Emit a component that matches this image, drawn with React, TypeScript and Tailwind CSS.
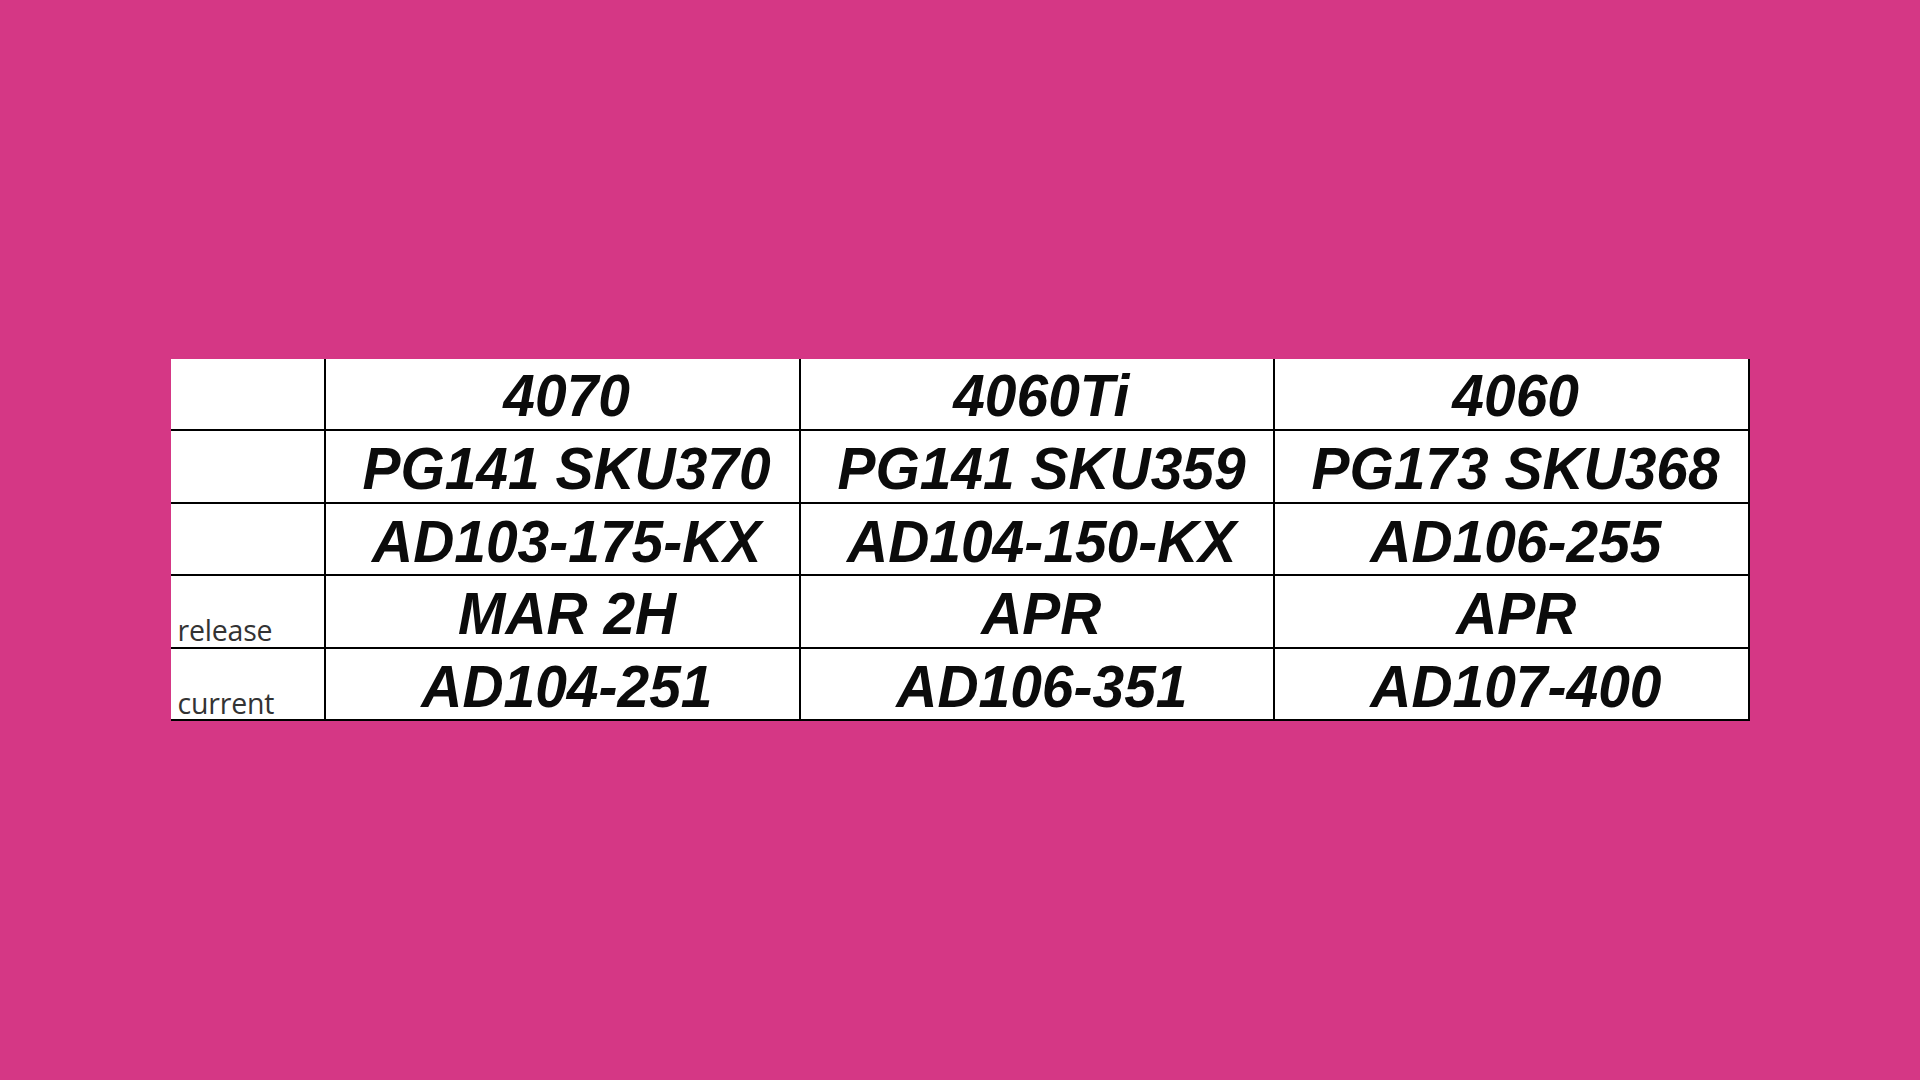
const rows = [
  { label: '', cells: ['4070', '4060Ti', '4060'] },
  { label: '', cells: ['PG141 SKU370', 'PG141 SKU359', 'PG173 SKU368'] },
  { label: '', cells: ['AD103-175-KX', 'AD104-150-KX', 'AD106-255'] },
  { label: 'release', cells: ['MAR 2H', 'APR', 'APR'] },
  { label: 'current', cells: ['AD104-251', 'AD106-351', 'AD107-400'] },
];

const App = () => {
  return (
    <div className="w-full h-screen bg-[#d53785] flex items-center justify-center">
      <div className="grid grid-cols-[155px_475px_474px_475px] bg-white">
        {rows.map((row, i) => (
          <div key={i} className="contents">
            <div className="h-[72.6px] border-r-2 border-b-2 border-black flex items-end pl-[7px] pb-[2px]">
              <span
                className="text-[28.5px] leading-none text-[#333333] tracking-[-0.2px]"
                style={{ fontFamily: '"Open Sans", "Noto Sans", sans-serif' }}
              >
                {row.label}
              </span>
            </div>
            {row.cells.map((cell, j) => (
              <div
                key={j}
                className="h-[72.6px] border-r-2 border-b-2 border-black flex items-center justify-center pl-[10px]"
              >
                <span
                  className="text-[59px] leading-none font-bold italic text-[#0b0b0b] scale-x-[0.965] pt-[6px]"
                  style={{ fontFamily: '"Liberation Sans", Arial, sans-serif' }}
                >
                  {cell}
                </span>
              </div>
            ))}
          </div>
        ))}
      </div>
    </div>
  );
};

export default App;
